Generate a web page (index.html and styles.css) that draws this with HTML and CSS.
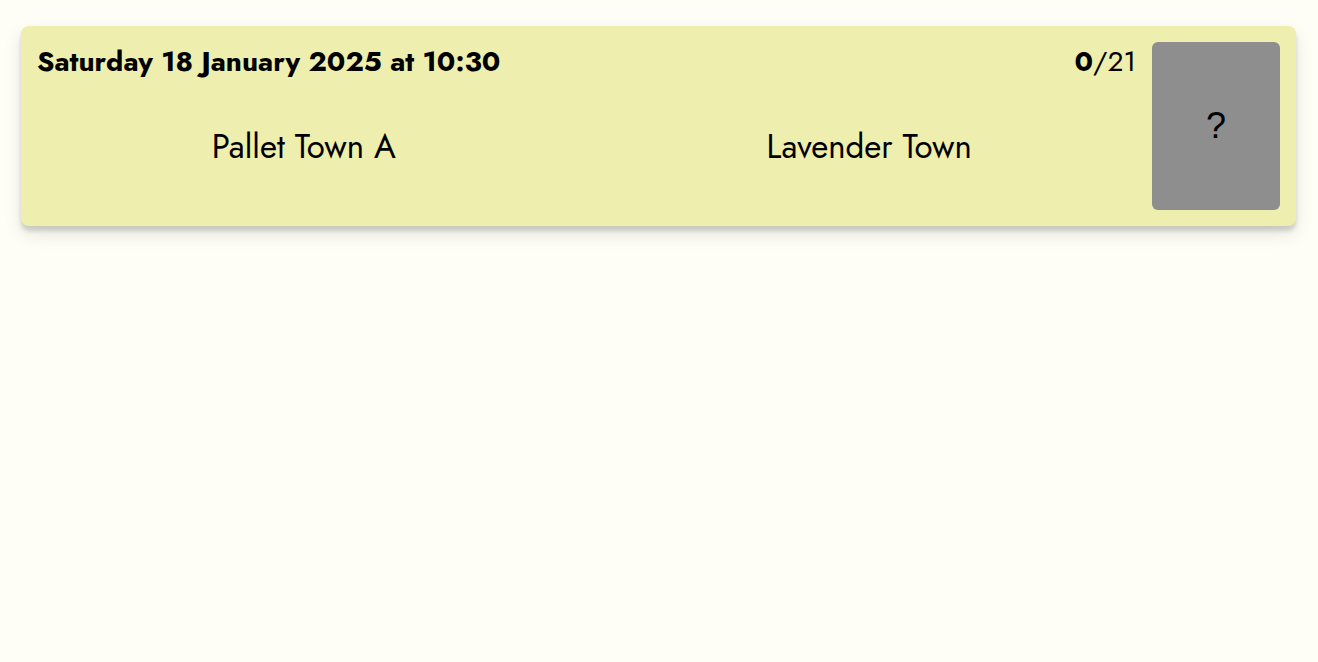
FILE: index.html
```html
<!DOCTYPE html>
<html>
  <head>
    <title>Fixtures</title>
    <link rel="stylesheet" href="styles.css">
  </head>
  <body>
    <div class="match">
      <div class="match-main">
        <div class="match-head">
          <span class="date">Saturday 18 January 2025 at 10:30</span>
          <span class="count"><b>0</b>/21</span>
        </div>
        <div class="teams">
          <div class="team">Pallet Town A</div>
          <div class="team">Lavender Town</div>
        </div>
      </div>
      <div class="result">?</div>
    </div>
  </body>
</html>
```

FILE: styles.css
```css
html {
  min-height: 100%;
}
body {
  margin: 0;
  min-height: 600px;
  padding: 26px 22px 36px 21px;
  background-color: #fefef7;
  font-family: "Jost", "Lato", sans-serif;
  color: #000;
}
.match {
  display: flex;
  height: 168px;
  padding: 16px 16px 16px 0;
  background-color: #eeeeae;
  border-radius: 8px;
  box-shadow: 0 5px 4px rgba(0, 0, 0, 0.14), 0 8px 18px rgba(0, 0, 0, 0.1);
}
.match-main {
  flex: 1;
  display: flex;
  flex-direction: column;
}
.match-head {
  display: flex;
  justify-content: space-between;
  align-items: baseline;
  padding: 0 16px;
  font-size: 28px;
  line-height: 40px;
}
.date {
  font-weight: 700;
}
.count b {
  font-weight: 700;
}
.teams {
  flex: 1;
  display: grid;
  grid-template-columns: 1fr 1fr;
  align-items: center;
  text-align: center;
  font-size: 33px;
}
.result {
  width: 128px;
  display: flex;
  align-items: center;
  justify-content: center;
  background-color: #8e8e8e;
  border-radius: 6px;
  font-family: "Liberation Sans", Arial, sans-serif;
  font-size: 36px;
}
```
